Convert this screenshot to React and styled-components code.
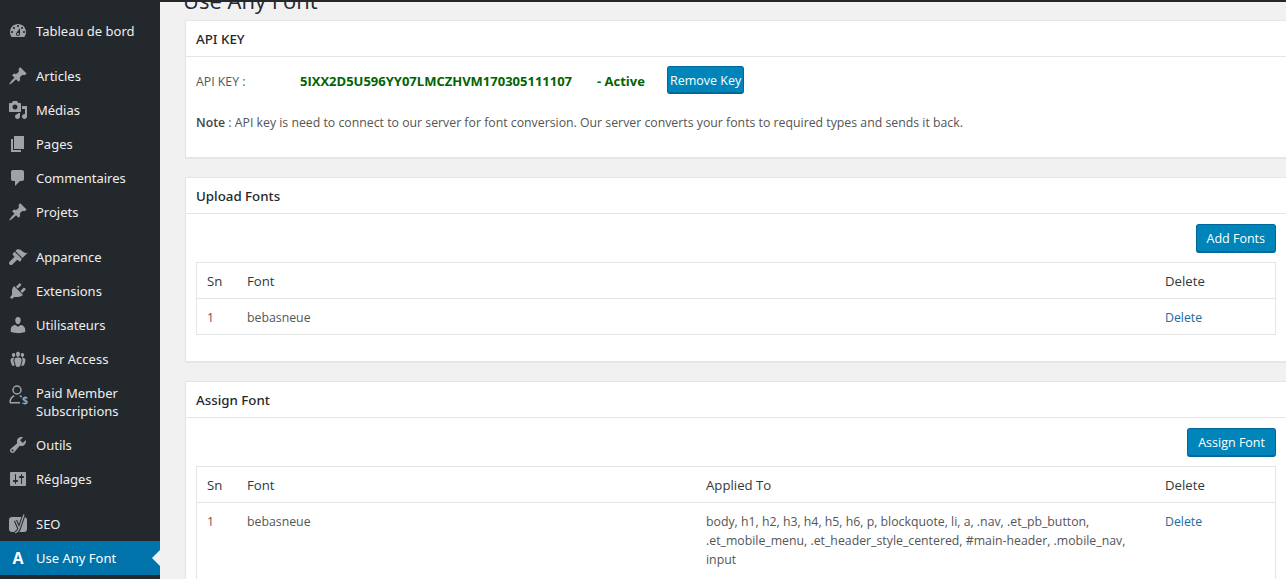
import React from 'react';
import styled, { createGlobalStyle } from 'styled-components';

const GlobalStyle = createGlobalStyle`
  html, body {
    margin: 0;
    height: 100%;
    overflow: hidden;
    background: #f1f1f1;
  }
  * {
    box-sizing: border-box;
  }
`;

const ICONS = {
  dashboard:
    'M3.76 16h12.48c1.1-1.37 1.76-3.11 1.76-5 0-4.42-3.58-8-8-8s-8 3.58-8 8c0 1.89.66 3.63 1.76 5zM10 4c.55 0 1 .45 1 1s-.45 1-1 1-1-.45-1-1 .45-1 1-1zM6 6c.55 0 1 .45 1 1s-.45 1-1 1-1-.45-1-1 .45-1 1-1zm8 0c.55 0 1 .45 1 1s-.45 1-1 1-1-.45-1-1 .45-1 1-1zm-5.37 5.55L12 7v6c0 1.1-.9 2-2 2s-2-.9-2-2c0-.57.24-1.08.63-1.45zM4 10c.55 0 1 .45 1 1s-.45 1-1 1-1-.45-1-1 .45-1 1-1zm12 0c.55 0 1 .45 1 1s-.45 1-1 1-1-.45-1-1 .45-1 1-1zm-5 3c0-.55-.45-1-1-1s-1 .45-1 1 .45 1 1 1 1-.45 1-1z',
  pin: 'M10.44 3.02l1.82-1.82 6.36 6.35-1.83 1.82c-1.05-.68-2.48-.57-3.41.36l-.75.75c-.92.93-1.04 2.35-.35 3.41l-1.83 1.82-2.41-2.41-2.8 2.79c-.42.42-3.38 2.71-3.8 2.29s1.86-3.39 2.28-3.81l2.79-2.79L4.1 9.36l1.83-1.82c1.05.69 2.48.57 3.4-.36l.75-.75c.93-.92 1.05-2.35.36-3.41z',
  media:
    'M13 11V4c0-.55-.45-1-1-1h-1.67L9 1H5L3.67 3H2c-.55 0-1 .45-1 1v7c0 .55.45 1 1 1h10c.55 0 1-.45 1-1zM7 4.5c1.38 0 2.5 1.12 2.5 2.5S8.38 9.5 7 9.5 4.5 8.38 4.5 7 5.62 4.5 7 4.5zM14 6h5v10.5c0 1.38-1.12 2.5-2.5 2.5S14 17.88 14 16.5s1.12-2.5 2.5-2.5c.17 0 .34.02.5.05V9h-3V6zm-4 8.05V13h2v3.5c0 1.38-1.12 2.5-2.5 2.5S7 17.88 7 16.5 8.12 14 9.5 14c.17 0 .34.02.5.05z',
  page: 'M6 15V2h10v13H6zm-1 1h8v2H3V5h2v11z',
  comment:
    'M5 2h9c1.1 0 2 .9 2 2v7c0 1.1-.9 2-2 2h-2l-5 5v-5H5c-1.1 0-2-.9-2-2V4c0-1.1.9-2 2-2z',
  brush:
    'M14.48 11.06L7.41 3.99l1.5-1.5c.5-.56 2.3-.47 3.51.32 1.21.8 1.43 1.28 2.91 2.1 1.18.64 2.45 1.26 4.45.85zM13.77 11.77L6.7 4.7 4.93 6.47c-.39.39-.39 1.02 0 1.41l1.06 1.06c.39.39.39 1.03 0 1.42L1.6 14.7c-.8.8-.8 2 0 2.8s2 .8 2.8 0l4.3-4.3c.39-.39 1.03-.39 1.42 0l1.06 1.06c.39.39 1.02.39 1.41 0z',
  plugin:
    'M13.11 4.36L9.87 7.6 8 5.73l3.24-3.24c.35-.34 1.05-.2 1.56.32.52.51.66 1.21.31 1.55zm-8 1.77l.91-1.12 9.01 9.01-1.19.84c-.71.71-2.63 1.16-3.82 1.16H6.14L4.9 17.26c-.59.59-1.54.59-2.12 0-.59-.58-.59-1.53 0-2.12l1.24-1.24v-3.88c0-1.13.4-3.19 1.09-3.89zm7.26 3.97l3.24-3.24c.34-.35 1.04-.21 1.55.31.52.51.66 1.21.31 1.55l-3.24 3.25z',
  user: 'M10 9.25c-2.27 0-2.73-3.44-2.73-3.44C7 4.02 7.82 2 9.97 2c2.16 0 2.98 2.02 2.71 3.81 0 0-.41 3.44-2.68 3.44zm0 2.57L12.72 10c2.39 0 4.52 2.33 4.52 4.53v2.49s-3.65 1.13-7.24 1.13c-3.65 0-7.24-1.13-7.24-1.13v-2.49c0-2.25 1.94-4.48 4.47-4.48z',
  groups:
    'M8.03 4.46c-.29 1.28.55 3.46 1.97 3.46 1.41 0 2.25-2.18 1.96-3.46-.22-.98-1.08-1.63-1.96-1.63-.89 0-1.74.65-1.97 1.63zm-4.13.9c-.25 1.08.47 2.93 1.67 2.93s1.92-1.85 1.67-2.93c-.19-.83-.92-1.39-1.67-1.39s-1.48.56-1.67 1.39zm8.86 0c-.25 1.08.47 2.93 1.66 2.93 1.2 0 1.92-1.85 1.67-2.93-.19-.83-.92-1.39-1.67-1.39-.74 0-1.47.56-1.66 1.39zm-.59 11.43l1.25-4.3C14.2 10 12.71 8.47 10 8.47c-2.72 0-4.21 1.53-3.44 4.02l1.26 4.3C8.05 17.51 9 18 10 18c.98 0 1.94-.49 2.17-1.21zm-6.1-7.63c-.49.67-.96 1.83-.42 3.59l1.12 3.79c-.34.2-.77.31-1.2.31-.85 0-1.65-.41-1.85-1.03l-1.07-3.65c-.65-2.11.61-3.4 2.92-3.4.27 0 .54.02.79.06-.1.1-.2.22-.29.33zm8.35-.39c2.31 0 3.58 1.29 2.92 3.4l-1.07 3.65c-.2.62-1 1.03-1.85 1.03-.43 0-.86-.11-1.2-.31l1.11-3.77c.55-1.78.08-2.94-.42-3.61-.08-.11-.18-.23-.28-.33.25-.04.51-.06.79-.06z',
  tools:
    'M16.68 9.77c-1.34 1.34-3.3 1.67-4.95.99l-5.41 6.52c-.99.99-2.59.99-3.58 0s-.99-2.59 0-3.57l6.52-5.42c-.68-1.65-.35-3.61.99-4.95 1.28-1.28 3.12-1.62 4.72-1.06l-2.89 2.89 2.82 2.82 2.86-2.87c.53 1.58.18 3.39-1.08 4.65zM3.81 16.21c.4.39 1.04.39 1.43 0 .4-.4.4-1.04 0-1.43-.39-.4-1.03-.4-1.43 0-.39.39-.39 1.03 0 1.43z',
  settings:
    'M18 16V4c0-.55-.45-1-1-1H3c-.55 0-1 .45-1 1v12c0 .55.45 1 1 1h14c.55 0 1-.45 1-1zM8 11h1c.55 0 1 .45 1 1s-.45 1-1 1H8v1.5c0 .28-.22.5-.5.5s-.5-.22-.5-.5V13H6c-.55 0-1-.45-1-1s.45-1 1-1h1V5.5c0-.28.22-.5.5-.5s.5.22.5.5V11zm5-2h-1c-.55 0-1-.45-1-1s.45-1 1-1h1V5.5c0-.28.22-.5.5-.5s.5.22.5.5V7h1c.55 0 1 .45 1 1s-.45 1-1 1h-1v5.5c0 .28-.22.5-.5.5s-.5-.22-.5-.5V9z',
};

const MENU = [
  { label: 'Tableau de bord', icon: 'dashboard', gap: true },
  { label: 'Articles', icon: 'pin' },
  { label: 'Médias', icon: 'media' },
  { label: 'Pages', icon: 'page' },
  { label: 'Commentaires', icon: 'comment' },
  { label: 'Projets', icon: 'pin', gap: true },
  { label: 'Apparence', icon: 'brush' },
  { label: 'Extensions', icon: 'plugin' },
  { label: 'Utilisateurs', icon: 'user' },
  { label: 'User Access', icon: 'groups' },
  { label: 'Paid Member Subscriptions', icon: 'paid' },
  { label: 'Outils', icon: 'tools' },
  { label: 'Réglages', icon: 'settings', gap: true },
  { label: 'SEO', icon: 'yoast' },
  { label: 'Use Any Font', icon: 'font', active: true },
];

const Page = styled.div`
  height: 579px;
  width: 1286px;
  overflow: hidden;
  display: flex;
  flex-direction: column;
  background: #f1f1f1;
  font-family: 'Open Sans', 'Noto Sans', sans-serif;
`;

const TopEdge = styled.div`
  position: relative;
  z-index: 1;
  height: 2px;
  flex-shrink: 0;
  background: #23282d;
`;

const Body = styled.div`
  flex: 1;
  min-height: 0;
  display: flex;
`;

const Sidebar = styled.nav`
  width: 160px;
  flex-shrink: 0;
  padding-top: 12px;
  background: #23282d;
`;

const MenuItem = styled.div`
  display: flex;
  align-items: flex-start;
  position: relative;
  padding: 8px;
  margin-bottom: ${({ $gap }) => ($gap ? '11px' : '0')};
  background: ${({ $active }) => ($active ? '#0073aa' : 'transparent')};
  color: ${({ $active }) => ($active ? '#fff' : '#eee')};
  font-family: 'Noto Sans', sans-serif;
  font-size: 13px;
  line-height: 18px;

  ${({ $active }) =>
    $active &&
    `
    &::after {
      content: '';
      position: absolute;
      right: 0;
      top: 50%;
      margin-top: -8px;
      border: 8px solid transparent;
      border-right-color: #f1f1f1;
      border-left-width: 0;
    }
  `}
`;

const IconSlot = styled.span`
  width: 20px;
  height: 18px;
  margin-right: 8px;
  flex-shrink: 0;
  display: flex;
  align-items: center;
  justify-content: center;
  color: #9ea3a8;
`;

const FontGlyph = styled.span`
  color: #fff;
  font-family: 'Open Sans', sans-serif;
  font-size: 16px;
  font-weight: 700;
  line-height: 18px;
`;

const Main = styled.main`
  flex: 1;
  min-width: 0;
  margin-right: -1px;
  padding-left: 25px;
`;

const PageTitle = styled.h1`
  margin: -16px 0 5px -2px;
  color: #23282d;
  font-size: 22px;
  font-weight: 400;
  line-height: 29px;
`;

const Panel = styled.section`
  margin-bottom: 19px;
  padding-bottom: 25px;
  background: #fff;
  border: 1px solid #e5e5e5;
  box-shadow: 0 1px 1px rgba(0, 0, 0, 0.04);
`;

const PanelHeading = styled.h2`
  margin: 0;
  height: 36px;
  padding: 0 10px;
  border-bottom: 1px solid #e5e5e5;
  color: #23282d;
  font-family: 'Noto Sans', sans-serif;
  font-size: 13.3px;
  font-weight: 500;
  line-height: 37px;
`;

const KeyRow = styled.div`
  display: flex;
  align-items: center;
  height: 30px;
  margin: 8px 10px 0;
`;

const KeyLabel = styled.span`
  width: 104px;
  margin-top: 2px;
  color: #555;
  font-size: 12.3px;
`;

const KeyValue = styled.b`
  width: 297px;
  margin-top: 2px;
  color: #006400;
  font-size: 13px;
  font-weight: 700;
`;

const KeyStatus = styled.b`
  width: 70px;
  margin-top: 2px;
  color: #006400;
  font-size: 13px;
  font-weight: 700;
`;

const BlueButton = styled.button`
  height: ${({ $tall }) => ($tall ? '29px' : '28px')};
  padding: 1px ${({ $inset }) => $inset}px 0;
  border: 1px solid #006799;
  border-bottom-width: 2px;
  border-radius: 3px;
  background: #0085ba;
  color: #fff;
  font-family: inherit;
  font-size: 12.5px;
  line-height: 25px;
  white-space: nowrap;
`;

const Note = styled.p`
  margin: 19px 10px 0;
  color: #555;
  font-size: 12.3px;
  line-height: 18px;

  strong {
    font-weight: 600;
    color: #444;
  }
`;

const ButtonRow = styled.div`
  display: flex;
  justify-content: flex-end;
  margin: 10px 10px 9px;
`;

const DataTable = styled.table`
  width: calc(100% - 20px);
  margin: 0 10px 1px;
  border: 1px solid #e5e5e5;
  border-collapse: separate;
  border-spacing: 0;
  table-layout: fixed;
  font-size: 12.3px;
`;

const HeadCell = styled.th`
  height: 36px;
  padding: 0 10px;
  border-bottom: 1px solid #e5e5e5;
  color: #32373c;
  font-size: 13.2px;
  font-weight: 400;
  text-align: left;
`;

const Cell = styled.td`
  padding: 9px 10px ${({ $tail }) => ($tail ? '20px' : '7px')};
  color: ${({ $tone }) => $tone || '#555'};
  line-height: 19px;
  vertical-align: top;
`;

const DeleteLink = styled.a`
  color: #24699f;
`;

function MenuIcon({ name }) {
  if (name === 'font') return <FontGlyph>A</FontGlyph>;
  if (name === 'paid') {
    return (
      <svg width="22" height="22" viewBox="0 0 22 22" style={{ flexShrink: 0, marginTop: 4 }}>
        <g fill="none" stroke="currentColor" strokeWidth="1.5">
          <circle cx="10" cy="6" r="4" />
          <path d="M3 18.800c.1-3 1.500-5.900 4.200-7M12.800 11.800c1 .4 1.600.9 1.800 1.400M3 18.800h10" />
        </g>
        <text x="15" y="19.500" fill="currentColor" fontSize="10.500" fontWeight="700" fontFamily="Open Sans">$</text>
      </svg>
    );
  }
  if (name === 'yoast') {
    return (
      <svg width="20" height="22" viewBox="0 0 20 22" style={{ flexShrink: 0 }}>
        <rect x="1" y="4" width="18" height="15" rx="3" fill="currentColor" />
        <path d="M7.500 7.500L10.800 15M16 1.500L11.200 15.500Q10 19 7 20" fill="none" stroke="#23282d" strokeWidth="3.400" />
        <path d="M7.500 7.500L10.800 15M16 1.500L11.200 15.500Q10 19 7 20" fill="none" stroke="currentColor" strokeWidth="1.300" />
      </svg>
    );
  }
  return (
    <svg width="20" height="20" viewBox="0 0 20 20" fill="currentColor" style={{ flexShrink: 0 }}>
      <path d={ICONS[name]} />
    </svg>
  );
}

export default function App() {
  return (
    <Page>
      <GlobalStyle />
      <TopEdge />
      <Body>
        <Sidebar>
          {MENU.map((item) => (
            <MenuItem key={item.label} $gap={item.gap} $active={item.active}>
              <IconSlot>
                <MenuIcon name={item.icon} />
              </IconSlot>
              {item.label}
            </MenuItem>
          ))}
        </Sidebar>

        <Main>
          <PageTitle>Use Any Font</PageTitle>

          <Panel>
            <PanelHeading>API KEY</PanelHeading>
            <KeyRow>
              <KeyLabel>API KEY :</KeyLabel>
              <KeyValue>5IXX2D5U596YY07LMCZHVM170305111107</KeyValue>
              <KeyStatus>- Active</KeyStatus>
              <BlueButton $inset={2}>Remove Key</BlueButton>
            </KeyRow>
            <Note>
              <strong>Note</strong> : API key is need to connect to our server for font conversion. Our
              server converts your fonts to required types and sends it back.
            </Note>
          </Panel>

          <Panel>
            <PanelHeading>Upload Fonts</PanelHeading>
            <ButtonRow>
              <BlueButton $tall $inset={10}>Add Fonts</BlueButton>
            </ButtonRow>
            <DataTable>
              <colgroup>
                <col style={{ width: 40 }} />
                <col />
                <col style={{ width: 120 }} />
              </colgroup>
              <thead>
                <tr>
                  <HeadCell>Sn</HeadCell>
                  <HeadCell>Font</HeadCell>
                  <HeadCell>Delete</HeadCell>
                </tr>
              </thead>
              <tbody>
                <tr>
                  <Cell $tone="#7d4a50">1</Cell>
                  <Cell>bebasneue</Cell>
                  <Cell>
                    <DeleteLink>Delete</DeleteLink>
                  </Cell>
                </tr>
              </tbody>
            </DataTable>
          </Panel>

          <Panel>
            <PanelHeading>Assign Font</PanelHeading>
            <ButtonRow>
              <BlueButton $tall $inset={10}>Assign Font</BlueButton>
            </ButtonRow>
            <DataTable>
              <colgroup>
                <col style={{ width: 40 }} />
                <col style={{ width: 459 }} />
                <col />
                <col style={{ width: 120 }} />
              </colgroup>
              <thead>
                <tr>
                  <HeadCell>Sn</HeadCell>
                  <HeadCell>Font</HeadCell>
                  <HeadCell>Applied To</HeadCell>
                  <HeadCell>Delete</HeadCell>
                </tr>
              </thead>
              <tbody>
                <tr>
                  <Cell $tone="#7d4a50">1</Cell>
                  <Cell>bebasneue</Cell>
                  <Cell $tail>
                    body, h1, h2, h3, h4, h5, h6, p, blockquote, li, a, .nav, .et_pb_button,
                    .et_mobile_menu, .et_header_style_centered, #main-header, .mobile_nav, input
                  </Cell>
                  <Cell>
                    <DeleteLink>Delete</DeleteLink>
                  </Cell>
                </tr>
              </tbody>
            </DataTable>
          </Panel>
        </Main>
      </Body>
    </Page>
  );
}
